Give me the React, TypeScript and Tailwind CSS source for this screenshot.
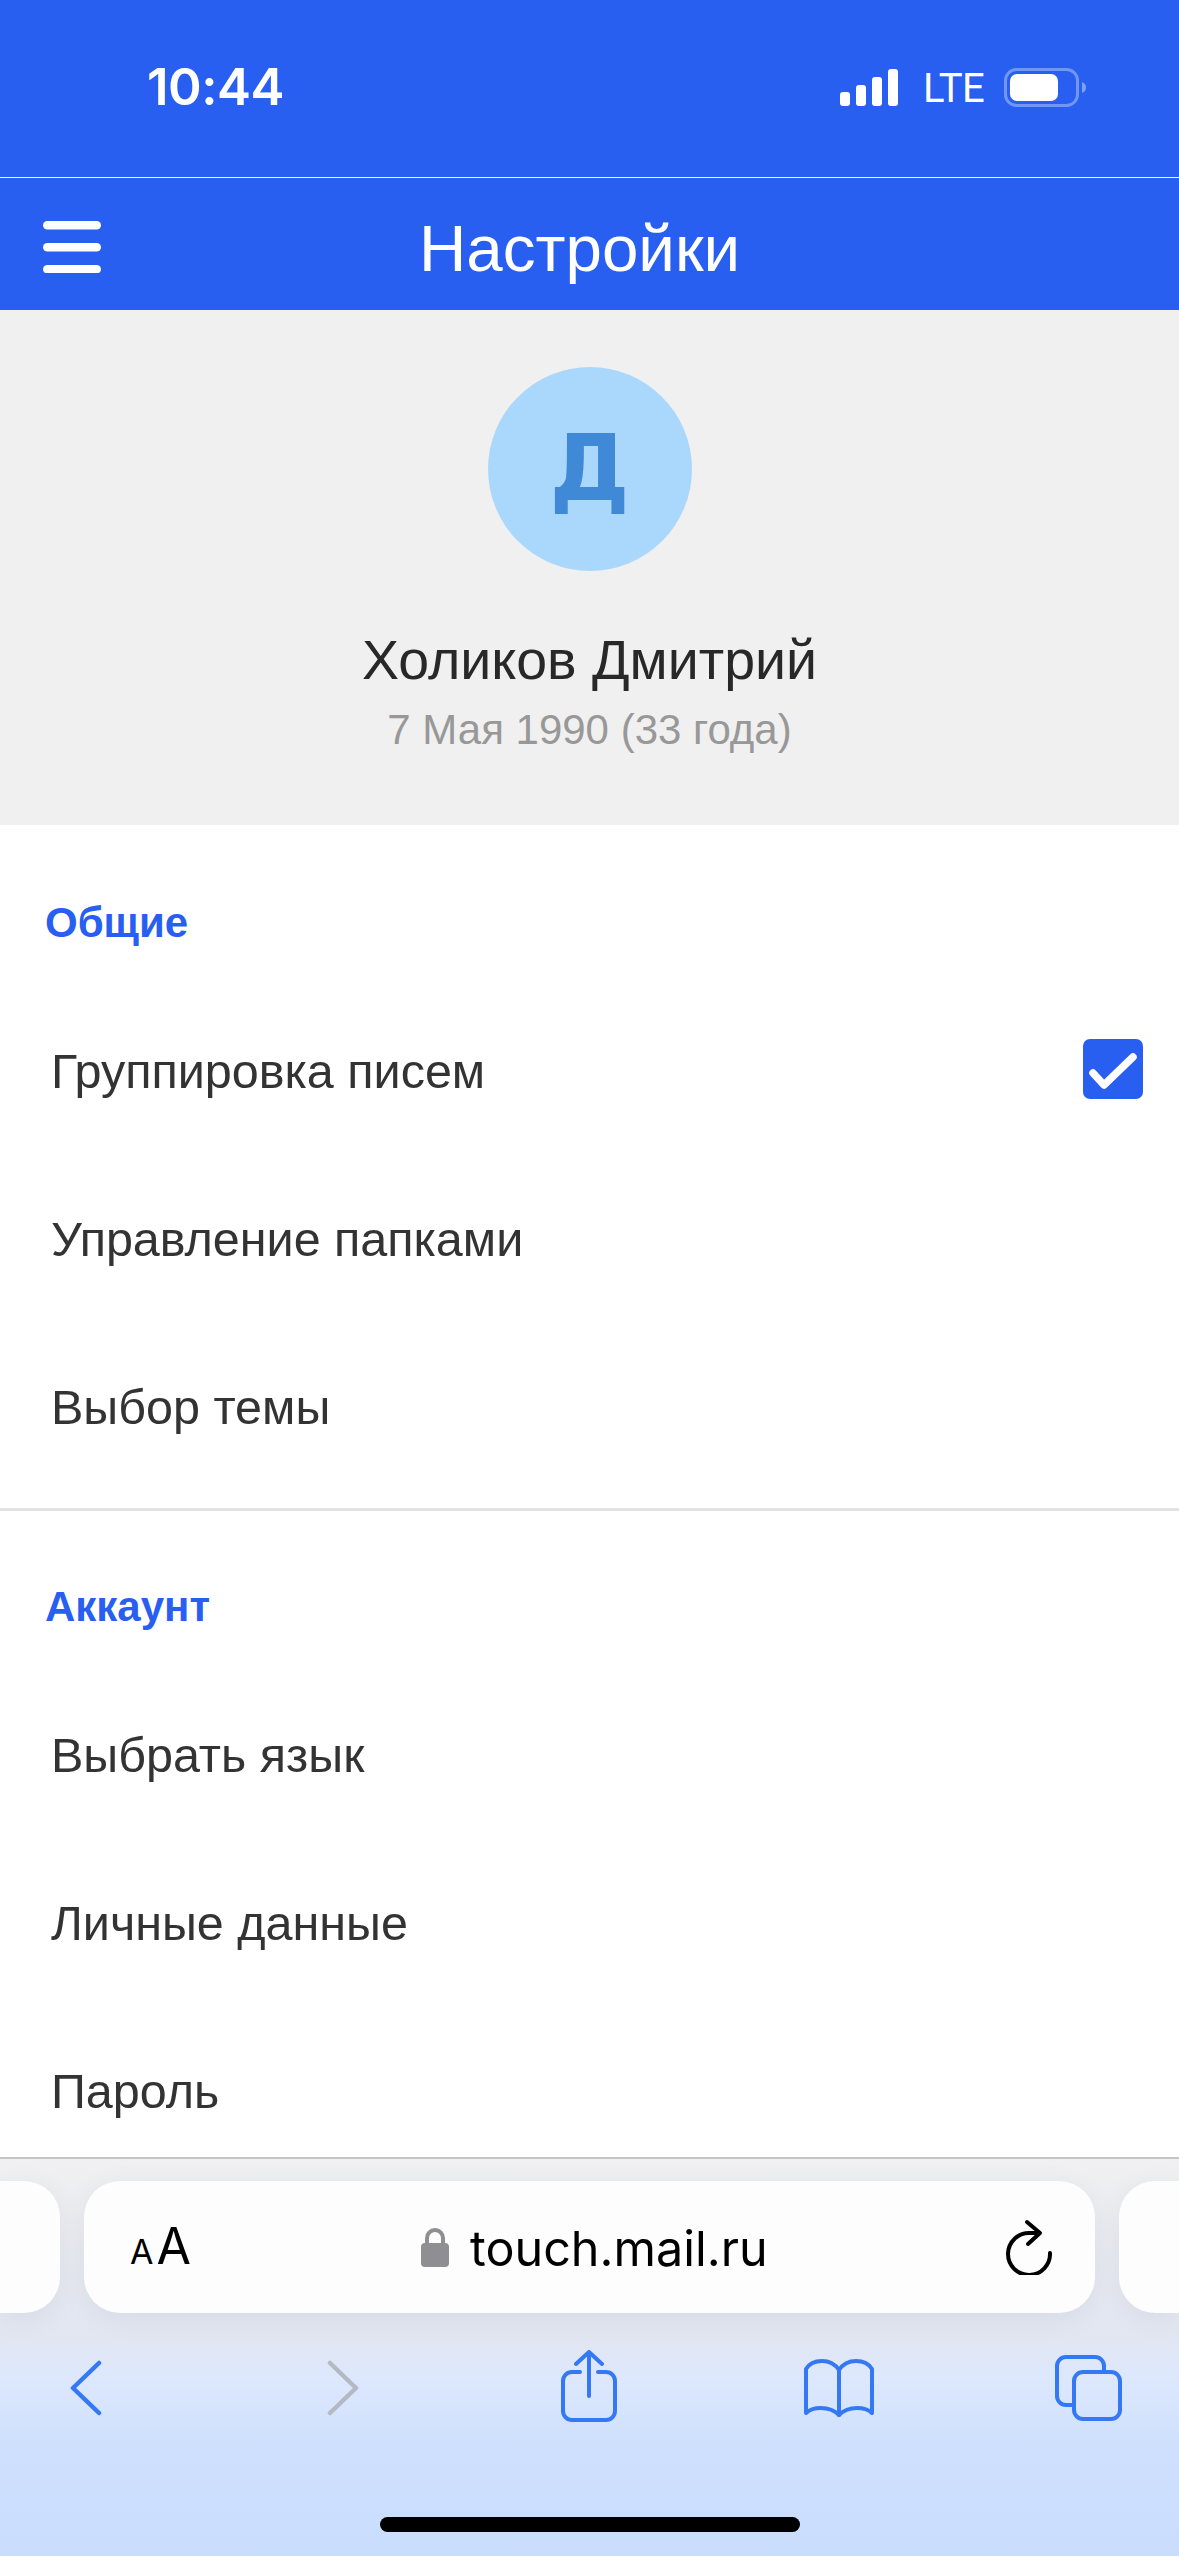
const sections = [
  { title: "Общие", rows: ["Группировка писем", "Управление папками", "Выбор темы"] },
  { title: "Аккаунт", rows: ["Выбрать язык", "Личные данные", "Пароль"] },
];

function StatusBar() {
  return (
    <div className="flex h-[177px] shrink-0 items-start bg-[#285ff0] pt-[62px] text-white">
      <span className="ml-[147px] w-[135px] font-['Inter',sans-serif] text-[51px] leading-[50px] font-semibold tracking-[-0.5px]">10:44</span>
      {/* signal */}
      <svg className="ml-[558px] mt-[7px]" width="58" height="37" viewBox="0 0 58 37" fill="#fff">
        <rect x="0" y="23" width="10" height="14" rx="3" />
        <rect x="16" y="16" width="10" height="21" rx="3" />
        <rect x="32" y="8" width="10" height="29" rx="3" />
        <rect x="48" y="0" width="10" height="37" rx="3" />
      </svg>
      <span className="ml-[25px] mt-[5px] w-[57px] font-['Roboto',sans-serif] text-[40px] leading-[44px] tracking-[-0.5px]">LTE</span>
      {/* battery */}
      <svg className="ml-[24px] mt-[6px]" width="84" height="40" viewBox="0 0 84 40" fill="none">
        <rect x="1.5" y="1.5" width="72" height="36" rx="11" stroke="#fff" strokeOpacity="0.35" strokeWidth="3" />
        <rect x="6" y="6" width="48" height="27" rx="7" fill="#fff" />
        <path d="M78 14c3 1 4 3 4 5.500s-1 4.500-4 5.500z" fill="#fff" fillOpacity="0.4" />
      </svg>
    </div>
  );
}

function NavBar() {
  return (
    <div className="flex h-[133px] shrink-0 items-start border-t border-[#f2f5fe] bg-[#285ff0] pt-[36px] text-white">
      <svg className="ml-[43px] mt-[7px]" width="58" height="52" viewBox="0 0 58 52" fill="#fff">
        <rect x="0" y="0" width="58" height="8.500" rx="4.250" />
        <rect x="0" y="22" width="58" height="8.500" rx="4.250" />
        <rect x="0" y="44" width="58" height="8.500" rx="4.250" />
      </svg>
      <span className="ml-[318px] font-['Liberation_Sans',sans-serif] text-[65.500px] leading-[70px]">Настройки</span>
    </div>
  );
}

function Profile() {
  return (
    <div className="flex h-[515px] shrink-0 flex-col items-center bg-[#f0f0f0] pt-[57px]">
      <div className="flex h-[204px] w-[204px] items-center justify-center rounded-full bg-[#aad8fc] font-['DejaVu_Sans',sans-serif] text-[90px] leading-none font-bold text-[#3f89d6]">
        Д
      </div>
      <div className="mt-[57px] font-['Liberation_Sans',sans-serif] text-[55.500px] leading-[64px] text-[#282828]">Холиков Дмитрий</div>
      <div className="mt-[13px] font-['Liberation_Sans',sans-serif] text-[42px] leading-[50px] text-[#989898]">7 Мая 1990 (33 года)</div>
    </div>
  );
}

function CheckBox() {
  return (
    <svg className="mb-[4px] mr-[36px]" width="60" height="60" viewBox="0 0 60 60">
      <rect width="60" height="60" rx="7" fill="#285ff0" />
      <path d="M10 34l11 12 29-28" fill="none" stroke="#fff" strokeWidth="7.500" strokeLinecap="round" strokeLinejoin="round" />
    </svg>
  );
}

function Toolbar() {
  return (
    <div className="flex h-[399px] shrink-0 flex-col border-t-2 border-[#c4c4c6] bg-[linear-gradient(180deg,#f0f0f1_0%,#e1e6f2_46%,#dde8fd_55%,#cfe0fd_71%,#c9ddfd_100%)]">
      <div className="mt-[22px] flex h-[132px] gap-[24px]">
        <div className="w-[60px] rounded-r-[36px] bg-[#fdfdfd] shadow-[0_6px_30px_rgba(0,0,0,0.06)]" />
        <div className="flex w-[1011px] items-center rounded-[36px] bg-[#fdfdfd] shadow-[0_6px_30px_rgba(0,0,0,0.06)]">
          <span className="ml-[46px] flex w-[58px] shrink-0 items-baseline gap-[3px] pt-[3px] font-['Inter',sans-serif] text-black">
            <span className="text-[34px] leading-[50px]">A</span>
            <span className="text-[50px] leading-[50px]">A</span>
          </span>
          <svg className="ml-[233px]" width="28" height="40" viewBox="0 0 28 40">
            <path d="M6 18v-7a8 8 0 0 1 16 0v7" fill="none" stroke="#8e8e93" strokeWidth="4" />
            <rect x="0" y="16" width="28" height="24" rx="4" fill="#8e8e93" />
          </svg>
          <span className="ml-[21px] w-[295px] pt-[3px] font-['Inter',sans-serif] text-[48.500px] leading-[60px] whitespace-nowrap text-black">touch.mail.ru</span>
          <svg className="ml-[241px]" width="46" height="56" viewBox="0 0 46 56" fill="none" stroke="#000" strokeWidth="4" strokeLinecap="round" strokeLinejoin="round">
            <path d="M33 14H24A21 21 0 1 0 44 34" />
            <path d="M21 3l13 11-12 11" />
          </svg>
        </div>
        <div className="w-[60px] rounded-l-[36px] bg-[#fdfdfd] shadow-[0_6px_30px_rgba(0,0,0,0.06)]" />
      </div>
      <div className="mt-[37px] flex items-center">
        <svg className="ml-[70px] mt-[4px]" width="32" height="56" viewBox="0 0 32 56" fill="none" stroke="#3478f6" strokeWidth="4.500" strokeLinecap="round" strokeLinejoin="round">
          <path d="M29 3L3 28l26 25" />
        </svg>
        <svg className="ml-[225px] mt-[4px]" width="32" height="56" viewBox="0 0 32 56" fill="none" stroke="#b4b9c4" strokeWidth="4.500" strokeLinecap="round" strokeLinejoin="round">
          <path d="M3 3l26 25L3 53" />
        </svg>
        <svg className="ml-[202px]" width="56" height="72" viewBox="0 0 56 72" fill="none" stroke="#3478f6" strokeWidth="4" strokeLinecap="round" strokeLinejoin="round">
          <path d="M19 22h-8a9 9 0 0 0-9 9v30a9 9 0 0 0 9 9h34a9 9 0 0 0 9-9V31a9 9 0 0 0-9-9h-8" />
          <path d="M28 46V3" />
          <path d="M15 14L28 2l13 12" />
        </svg>
        <svg className="ml-[187px] mt-[4px]" width="70" height="58" viewBox="0 0 70 58" fill="none" stroke="#3478f6" strokeWidth="4" strokeLinecap="round" strokeLinejoin="round">
          <path d="M35 11C31 5 25 2 18 2 10 2 5 5 2 10v44c3-3 8-5 15-5 7 0 14 3 18 7 4-4 11-7 18-7 7 0 12 2 15 5V10c-3-5-8-8-16-8-7 0-13 3-17 9z" />
          <path d="M35 11v45" />
        </svg>
        <svg className="ml-[181px] mt-[4px]" width="67" height="66" viewBox="0 0 67 66" fill="none" stroke="#3478f6" strokeWidth="4" strokeLinecap="round" strokeLinejoin="round">
          <path d="M49 15v-4a9 9 0 0 0-9-9H11a9 9 0 0 0-9 9v30a9 9 0 0 0 9 9h7" />
          <rect x="19" y="17" width="46" height="47" rx="9" />
        </svg>
      </div>
      <div className="mx-auto mt-[95px] h-[15px] w-[420px] rounded-full bg-black" />
    </div>
  );
}

export default function App() {
  return (
    <div className="flex h-[2556px] w-[1179px] flex-col overflow-hidden bg-white font-['Liberation_Sans',sans-serif]">
      <StatusBar />
      <NavBar />
      <Profile />
      <div className="min-h-0 flex-1 overflow-hidden">
        {sections.map((section, i) => (
          <div key={section.title} className={i === 0 ? "border-b-[3px] border-[#e2e2e2] pt-[68px] pb-[17px]" : "pt-[66px]"}>
            <div className="mb-[34px] pl-[45px] text-[42px] leading-[60px] font-bold text-[#285ff0]">{section.title}</div>
            {section.rows.map((row, j) => (
              <div key={row} className="flex h-[168px] items-center justify-between pl-[51px]">
                <span className="text-[48.500px] leading-[60px] text-[#333333]">{row}</span>
                {i === 0 && j === 0 && <CheckBox />}
              </div>
            ))}
          </div>
        ))}
      </div>
      <Toolbar />
    </div>
  );
}
